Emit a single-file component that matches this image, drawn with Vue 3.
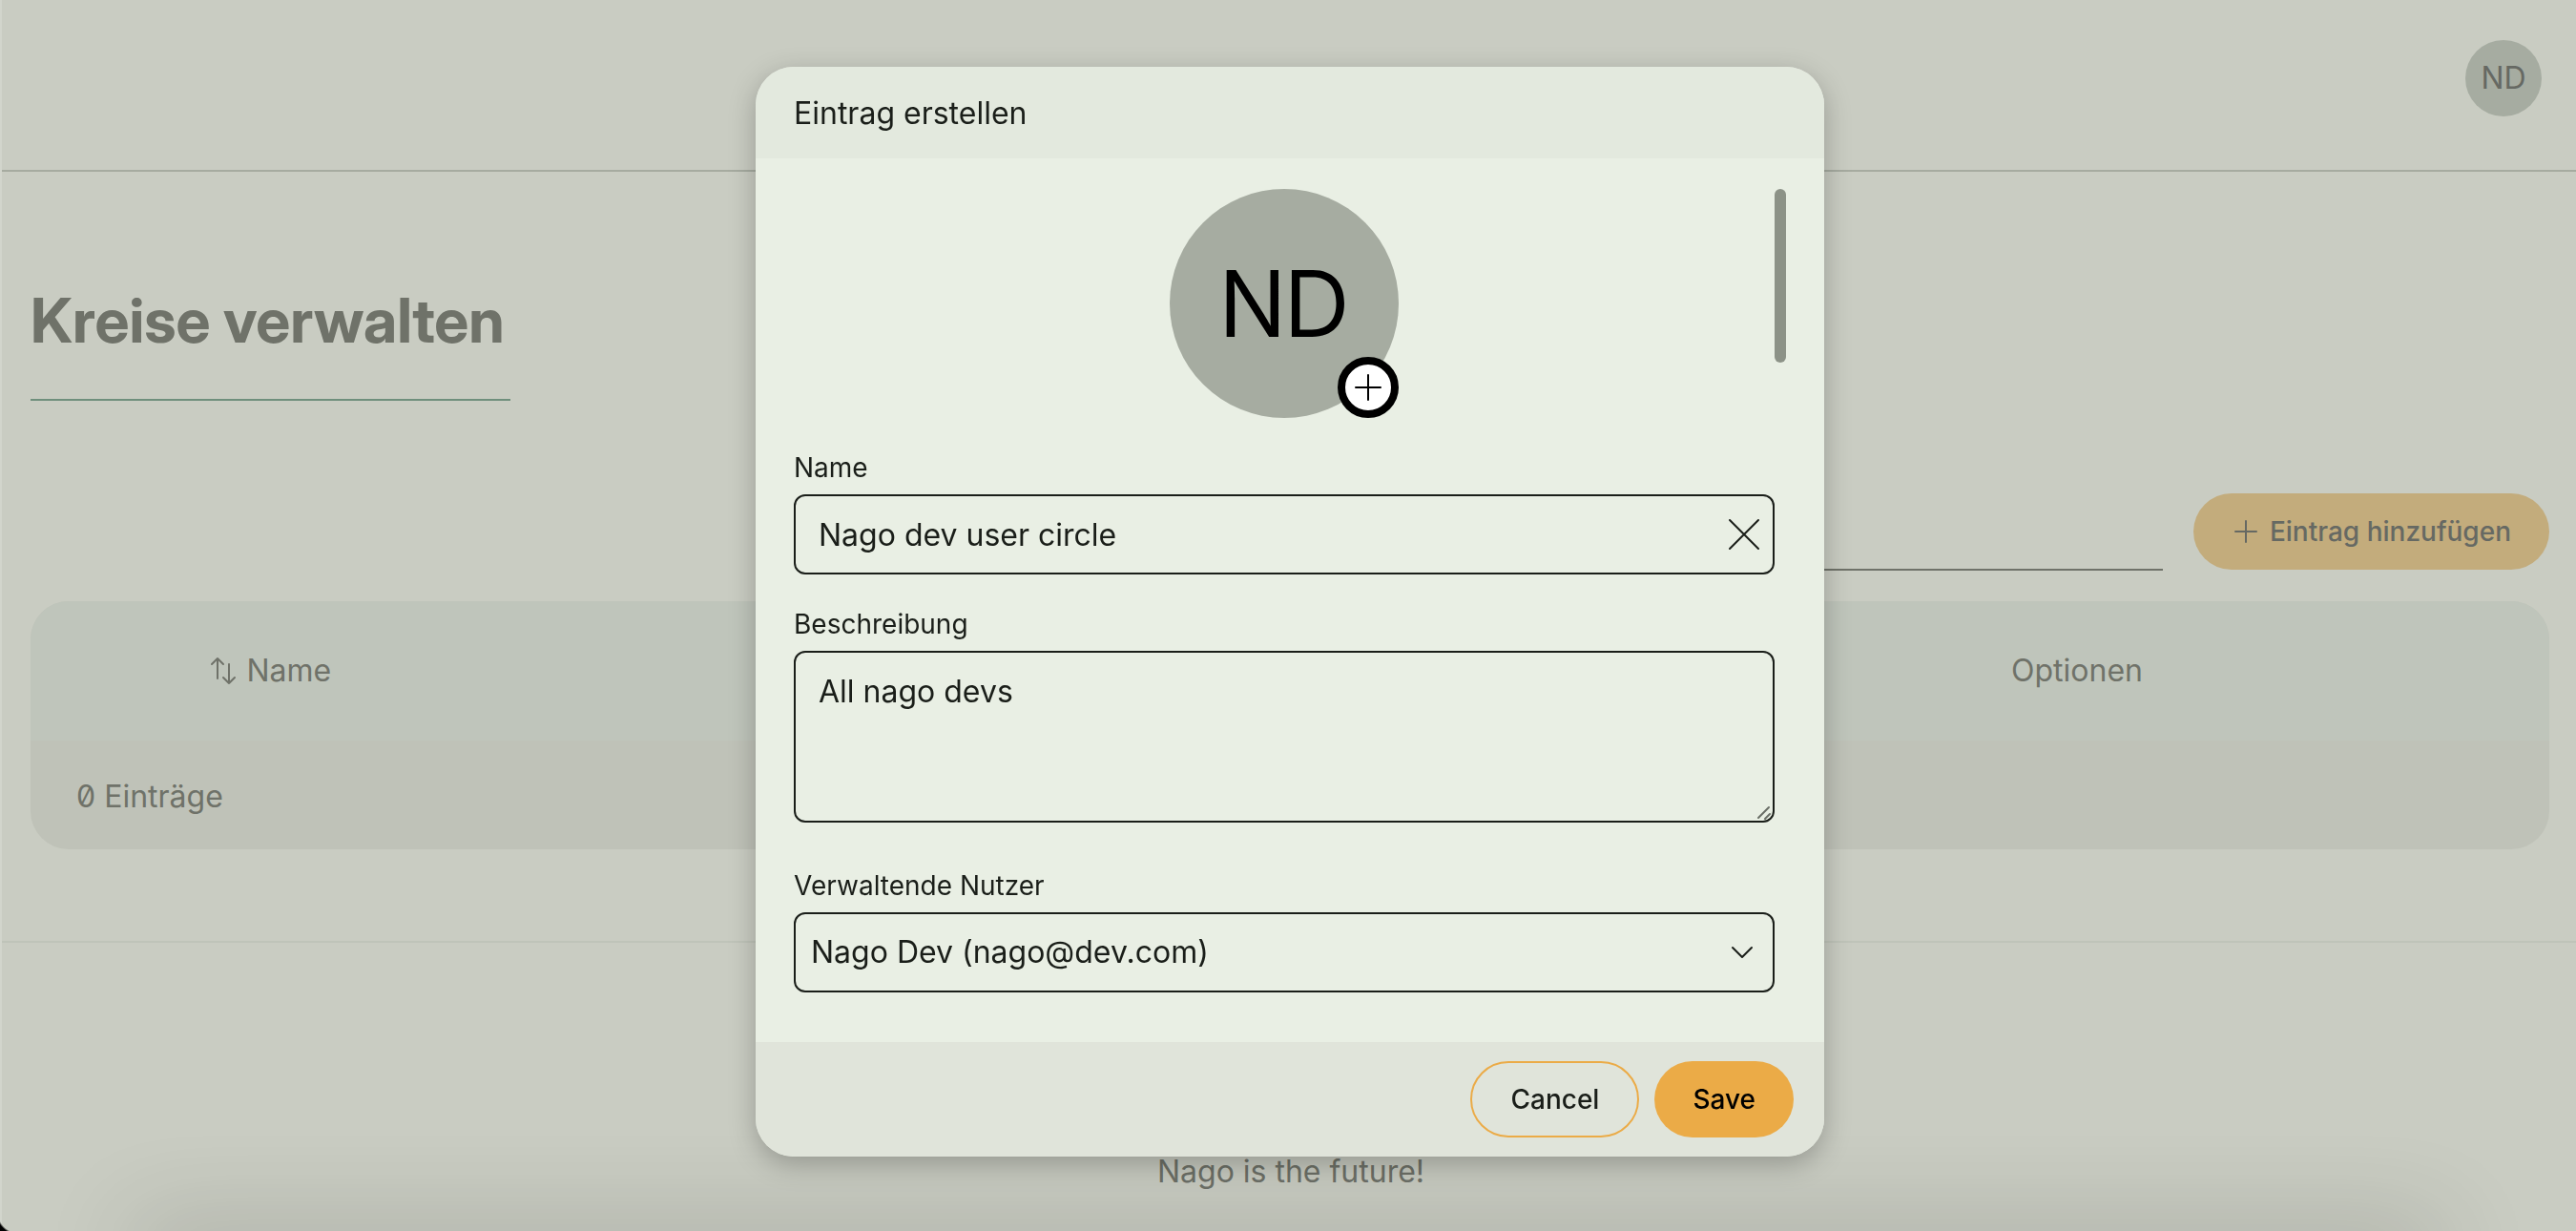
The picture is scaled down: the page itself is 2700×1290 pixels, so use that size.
<script setup>
import { ref } from 'vue'

const name = ref('Nago dev user circle')
const description = ref('All nago devs')
const manager = ref('nago')
const search = ref('')
</script>

<template>
  <div class="page">
    <header class="topbar">
      <span class="avatar">ND</span>
    </header>

    <main class="content">
      <h1>Kreise verwalten</h1>

      <div class="toolbar">
        <input v-model="search" class="search" type="search" aria-label="Suche" />
        <button class="pill add" type="button">
          <svg width="32" height="32" viewBox="0 0 32 32" fill="none" stroke="currentColor" stroke-width="2" stroke-linecap="round" aria-hidden="true">
            <path d="M15 5v22M4 16h22" />
          </svg>
          Eintrag hinzufügen
        </button>
      </div>

      <table class="entries">
        <colgroup>
          <col class="col-name" />
          <col class="col-mid" />
          <col class="col-options" />
        </colgroup>
        <thead>
          <tr>
            <th scope="col">
              <span class="sortable">
                <svg width="32" height="32" viewBox="0 0 32 32" fill="none" stroke="currentColor" stroke-width="2" stroke-linecap="round" stroke-linejoin="round" aria-hidden="true">
                  <path d="M10 24V3M4 9l6-6 6 6M22 9v20M16 23l6 6 6-6" />
                </svg>
                Name
              </span>
            </th>
            <td></td>
            <th scope="col">Optionen</th>
          </tr>
        </thead>
        <tfoot>
          <tr>
            <td colspan="3">0 Einträge</td>
          </tr>
        </tfoot>
      </table>
    </main>

    <footer class="site-footer">Nago is the future!</footer>
    <div class="bottom-shade"></div>

    <div class="overlay">
      <section class="dialog" role="dialog" aria-modal="true" aria-labelledby="dialog-title">
        <h2 id="dialog-title" class="dialog-head">Eintrag erstellen</h2>

        <div class="dialog-body">
          <form class="form" @submit.prevent>
            <div class="picture">
              <span class="picture-initials">ND</span>
              <button class="picture-add" type="button" aria-label="Bild hinzufügen">
                <svg width="32" height="32" viewBox="0 0 32 32" fill="none" stroke="currentColor" stroke-width="2" stroke-linecap="round" aria-hidden="true">
                  <path d="M16 3v26M3 16h26" />
                </svg>
              </button>
            </div>

            <div class="field">
              <label for="name">Name</label>
              <div class="control">
                <input id="name" v-model="name" type="text" />
                <button class="clear" type="button" aria-label="Leeren" @click="name = ''">
                  <svg width="36" height="36" viewBox="0 0 36 36" fill="none" stroke="currentColor" stroke-width="2" stroke-linecap="round" aria-hidden="true">
                    <path d="M3 3l30 30M33 3L3 33" />
                  </svg>
                </button>
              </div>
            </div>

            <div class="field area">
              <label for="description">Beschreibung</label>
              <div class="area-box">
                <textarea id="description" v-model="description"></textarea>
                <svg class="grip" width="16" height="16" viewBox="0 0 16 16" fill="none" stroke="#6a6e66" stroke-width="2" stroke-linecap="round" aria-hidden="true">
                  <path d="M2 13L13 2M9 14l5-5" />
                </svg>
              </div>
            </div>

            <div class="field">
              <label for="manager">Verwaltende Nutzer</label>
              <div class="control">
                <select id="manager" v-model="manager">
                  <option value="nago">Nago Dev (nago@dev.com)</option>
                </select>
                <svg class="chevron" width="24" height="24" viewBox="0 0 24 24" fill="none" stroke="currentColor" stroke-width="2" stroke-linecap="round" stroke-linejoin="round" aria-hidden="true">
                  <path d="M2 7l10 10L22 7" />
                </svg>
              </div>
            </div>
          </form>
          <div class="scrollbar"></div>
        </div>

        <div class="dialog-foot">
          <button class="pill outline" type="button">Cancel</button>
          <button class="pill primary" type="button">Save</button>
        </div>
      </section>
    </div>
  </div>
</template>

<style>
body {
  background: #c9ccc2;
}
</style>

<style scoped>
.page,
.page * {
  box-sizing: border-box;
}

.page {
  position: relative;
  min-height: 100vh;
  overflow: hidden;
  border-left: 2px solid #d2d5cc;
  background: #c9ccc2;
  color: #6f7269;
  font-family: Inter, "Liberation Sans", sans-serif;
  font-size: 32px;
  line-height: 48px;
}

/* rounded window corner at the bottom left */
.page::after {
  content: "";
  position: fixed;
  bottom: 0;
  left: 0;
  width: 16px;
  height: 16px;
  background: radial-gradient(circle at 20px -4px, transparent 22px, #000 24px);
}

button,
input,
textarea,
select {
  margin: 0;
  font: inherit;
  color: inherit;
}

svg {
  flex: none;
  display: block;
}

.topbar {
  display: flex;
  justify-content: flex-end;
  align-items: flex-start;
  height: 180px;
  padding: 42px 36px 0;
  border-bottom: 2px solid #a6aba0;
}

.avatar {
  display: flex;
  align-items: center;
  justify-content: center;
  width: 80px;
  height: 80px;
  border-radius: 50%;
  background: #a6aca1;
  color: #666963;
  font-size: 32px;
}

.content {
  padding: 104px 28px 96px 30px;
}

h1 {
  width: fit-content;
  margin: 0;
  padding: 0 6px 30px 0;
  border-bottom: 2px solid #6f8f7c;
  font-family: "Inter Display", Inter, "Liberation Sans", sans-serif;
  font-size: 64px;
  font-variation-settings: "opsz" 32;
  font-weight: 700;
  line-height: 104px;
}

.toolbar {
  display: flex;
  justify-content: flex-end;
  align-items: flex-start;
  gap: 32px;
  margin: 97px 0 32px;
}

.search {
  width: 480px;
  height: 81px;
  padding: 0 16px;
  border: 0;
  border-bottom: 2px solid #6f7269;
  background: transparent;
}

.pill {
  display: flex;
  align-items: center;
  justify-content: center;
  gap: 8px;
  height: 80px;
  padding: 0 40px;
  border: 0;
  border-radius: 40px;
  font-size: 28px;
  font-weight: 500;
}

.add {
  background: #c3ac7c;
  color: #666963;
}

.entries {
  width: 100%;
  overflow: hidden;
  table-layout: fixed;
  border-spacing: 0;
  border-radius: 40px;
  background: #bfc2b8;
}

.col-name {
  width: 19%;
}

.col-mid {
  width: 43.5%;
}

.entries thead {
  background: #bfc5bb;
}

.entries th,
.entries thead td {
  height: 146px;
  padding: 0;
  font-weight: 400;
  text-align: center;
}

.sortable {
  display: flex;
  align-items: center;
  justify-content: center;
  gap: 8px;
}

.entries tfoot td {
  height: 114px;
  padding: 4px 48px 0;
  font-feature-settings: "zero";
}

.site-footer {
  padding: 216px 0 0 4px;
  border-top: 2px solid #bfc4b9;
  text-align: center;
}

.bottom-shade {
  position: fixed;
  right: 140px;
  bottom: -40px;
  left: 140px;
  height: 40px;
  box-shadow: 0 0 100px rgba(0, 0, 0, 0.24);
}

.overlay {
  position: fixed;
  inset: 0;
  display: flex;
  justify-content: center;
  align-items: flex-start;
  padding: 70px 0 0 4px;
}

.dialog {
  width: 1120px;
  max-width: 100%;
  overflow: hidden;
  border-radius: 40px;
  background: #e9efe4;
  box-shadow: 0 8px 28px rgba(0, 0, 0, 0.25);
  color: #1a1e19;
}

.dialog-head {
  margin: 0;
  padding: 25px 40px 23px;
  background: #e3e9de;
  font-size: 32px;
  font-weight: 400;
}

.dialog-body {
  display: flex;
  padding: 32px 40px 52px;
}

.form {
  display: flex;
  flex: 1;
  flex-direction: column;
  gap: 32px;
}

.scrollbar {
  width: 12px;
  height: 182px;
  border-radius: 6px;
  background: #8c9287;
}

.picture {
  position: relative;
  display: flex;
  align-items: center;
  justify-content: center;
  align-self: center;
  width: 240px;
  height: 240px;
  border-radius: 50%;
  background: #a6aca1;
  color: #000;
  font-family: "Inter Display", Inter, "Liberation Sans", sans-serif;
  font-size: 96px;
  font-variation-settings: "opsz" 32;
}

.picture-add {
  position: absolute;
  right: 0;
  bottom: 0;
  display: flex;
  align-items: center;
  justify-content: center;
  width: 64px;
  height: 64px;
  padding: 0;
  border: 8px solid #000;
  border-radius: 50%;
  background: #fff;
}

.field {
  display: flex;
  flex-direction: column;
  gap: 8px;
}

.field label {
  font-size: 28px;
  line-height: 40px;
}

.control,
.area-box {
  position: relative;
  display: flex;
  align-items: center;
}

.control input,
.control select,
.area-box textarea {
  flex: 1;
  min-width: 0;
  height: 84px;
  padding: 0 72px 0 24px;
  border: 2px solid #1a1e19;
  border-radius: 12px;
  outline: 0;
  background: transparent;
}

.control select {
  padding-left: 16px;
  appearance: none;
}

.area {
  padding-bottom: 14px;
}

.area-box textarea {
  height: 180px;
  padding: 17px 24px;
  resize: none;
}

.clear {
  position: absolute;
  right: 14px;
  padding: 0;
  border: 0;
  background: none;
}

.chevron {
  position: absolute;
  right: 22px;
  pointer-events: none;
}

.grip {
  position: absolute;
  right: 3px;
  bottom: 2px;
}

.dialog-foot {
  display: flex;
  justify-content: flex-end;
  gap: 16px;
  padding: 20px 32px;
  background: #e0e4da;
}

.pill.outline {
  border: 2px solid #ebab47;
  background: transparent;
}

.primary {
  background: #ebab47;
  color: #000;
}
</style>
